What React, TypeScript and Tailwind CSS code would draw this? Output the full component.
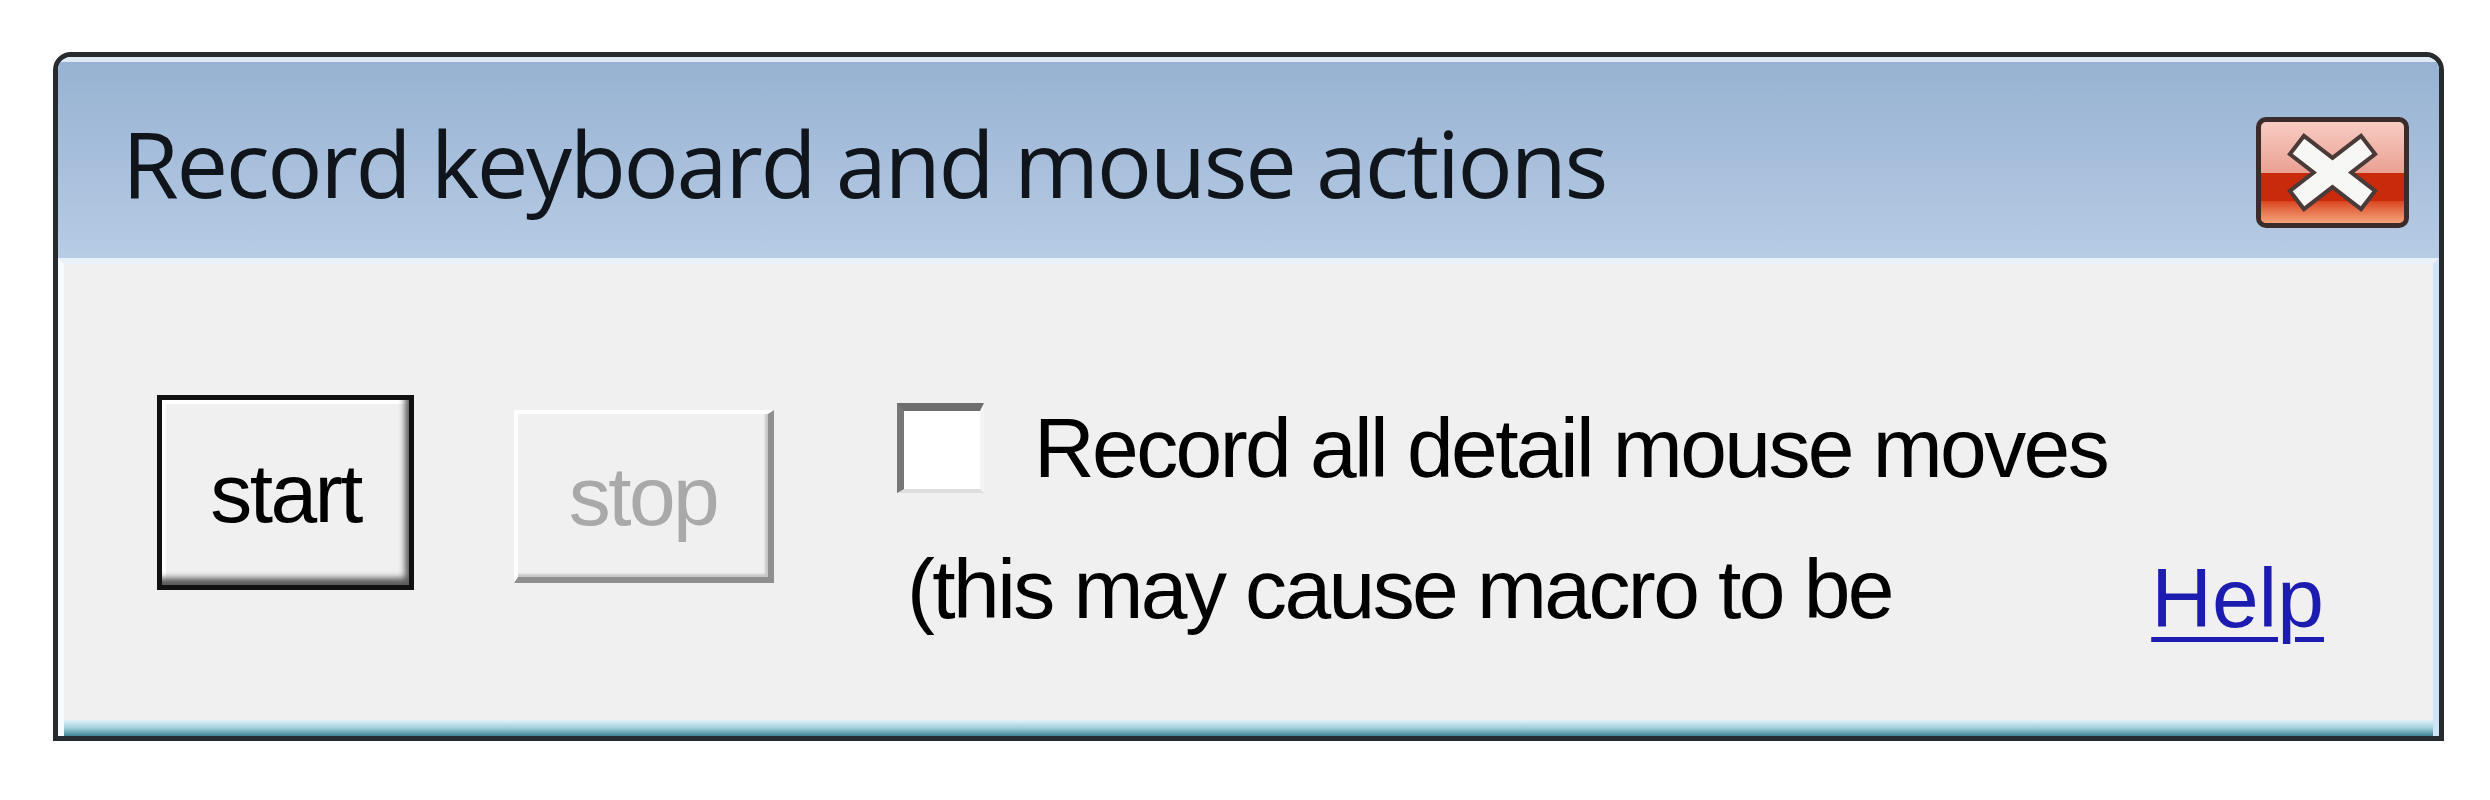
import React from "react"

function CloseButton() {
  return (
    <div className="self-start mt-[55px] w-[153px] h-[111px] rounded-[10px] border-[5px] border-[#3b2b2b] overflow-hidden relative bg-gradient-to-b from-[#f8ccc2] via-[#e9a193] to-[#f08a5c]">
      <div className="absolute left-0 right-0 top-[50%] h-[30%] bg-[#c92a0c]" />
      <div className="absolute left-0 right-0 bottom-0 h-[22%] bg-gradient-to-b from-[#d9441c] to-[#f4a27a]" />
      <svg viewBox="0 0 143 101" className="absolute inset-0 w-full h-full">
        <path d="M45 30 L98 71 M98 30 L45 71" stroke="#4a3a38" strokeWidth="27" strokeLinecap="square" />
        <path d="M45 30 L98 71 M98 30 L45 71" stroke="#f7f7f5" strokeWidth="19" strokeLinecap="square" />
      </svg>
    </div>
  )
}

export default function App() {
  return (
    <div className="min-h-screen bg-white pt-[52px] pl-[53px]">
      <div className="w-[2391px] rounded-t-[18px] border-[5px] border-[#252b2f] overflow-hidden">
        {/* title bar */}
        <div className="h-[201px] border-t-[5px] border-[#dfe9f3] bg-gradient-to-b from-[#97b2d2] to-[#b7cce5] flex items-start justify-between pl-[64px] pr-[30px]">
          <div
            className="mt-[55px] text-[#10151c] text-[92px] leading-none tracking-[-2.4px]"
            style={{ fontFamily: '"Open Sans", "Noto Sans", sans-serif' }}
          >
            Record keyboard and mouse actions
          </div>
          <CloseButton />
        </div>

        {/* body */}
        <div className="bg-[#f0f0f0] border-t-[6px] border-x-[6px] border-t-[#eaf1f9] border-l-[#f8fbfe] border-r-[#cfe5f7]">
          <div
            className="flex items-start pl-[93px] pr-[109px] pt-[131px] pb-[80px] text-black text-[84px] leading-none tracking-[-2.6px]"
            style={{ fontFamily: '"Liberation Sans", Arial, sans-serif' }}
          >
            <button className="w-[257px] h-[195px] border-[5px] border-[#111] bg-[#f0f0f0] flex items-center justify-center shadow-[inset_-6px_-9px_6px_-2px_#5a5a5a,inset_4px_4px_0_0_#ffffff]">
              start
            </button>
            <button className="ml-[100px] mt-[15px] w-[260px] h-[173px] bg-[#f0f0f0] text-[#a9a9a9] flex items-center justify-center border-t-[4px] border-l-[4px] border-t-[#fdfdfd] border-l-[#fdfdfd] border-b-[6px] border-r-[6px] border-b-[#8f8f8f] border-r-[#8f8f8f] shadow-[inset_-3px_-3px_2px_0_#c8c8c8]">
              stop
            </button>

            <div className="ml-[123px] mt-[8px] flex-1 flex flex-col">
              <div className="flex items-center">
                <div className="w-[87px] h-[90px] bg-white border-t-[8px] border-l-[7px] border-b-[4px] border-r-[4px] border-t-[#6e6e6e] border-l-[#777] border-b-[#dedede] border-r-[#f4f4f4]" />
                <span className="ml-[50px]">Record all detail mouse moves</span>
              </div>
              <div className="mt-[54px] flex items-start justify-between pl-[10px]">
                <span>(this may cause macro to be</span>
                <a href="#" className="mt-[9px] tracking-normal text-[#1c1cb0] underline decoration-[5px] underline-offset-[10px]">
                  Help
                </a>
              </div>
            </div>
          </div>
          <div className="h-[16px] bg-gradient-to-b from-[#e2f2f8] via-[#9fd0dc] to-[#3f8596]" />
        </div>
      </div>
    </div>
  )
}
